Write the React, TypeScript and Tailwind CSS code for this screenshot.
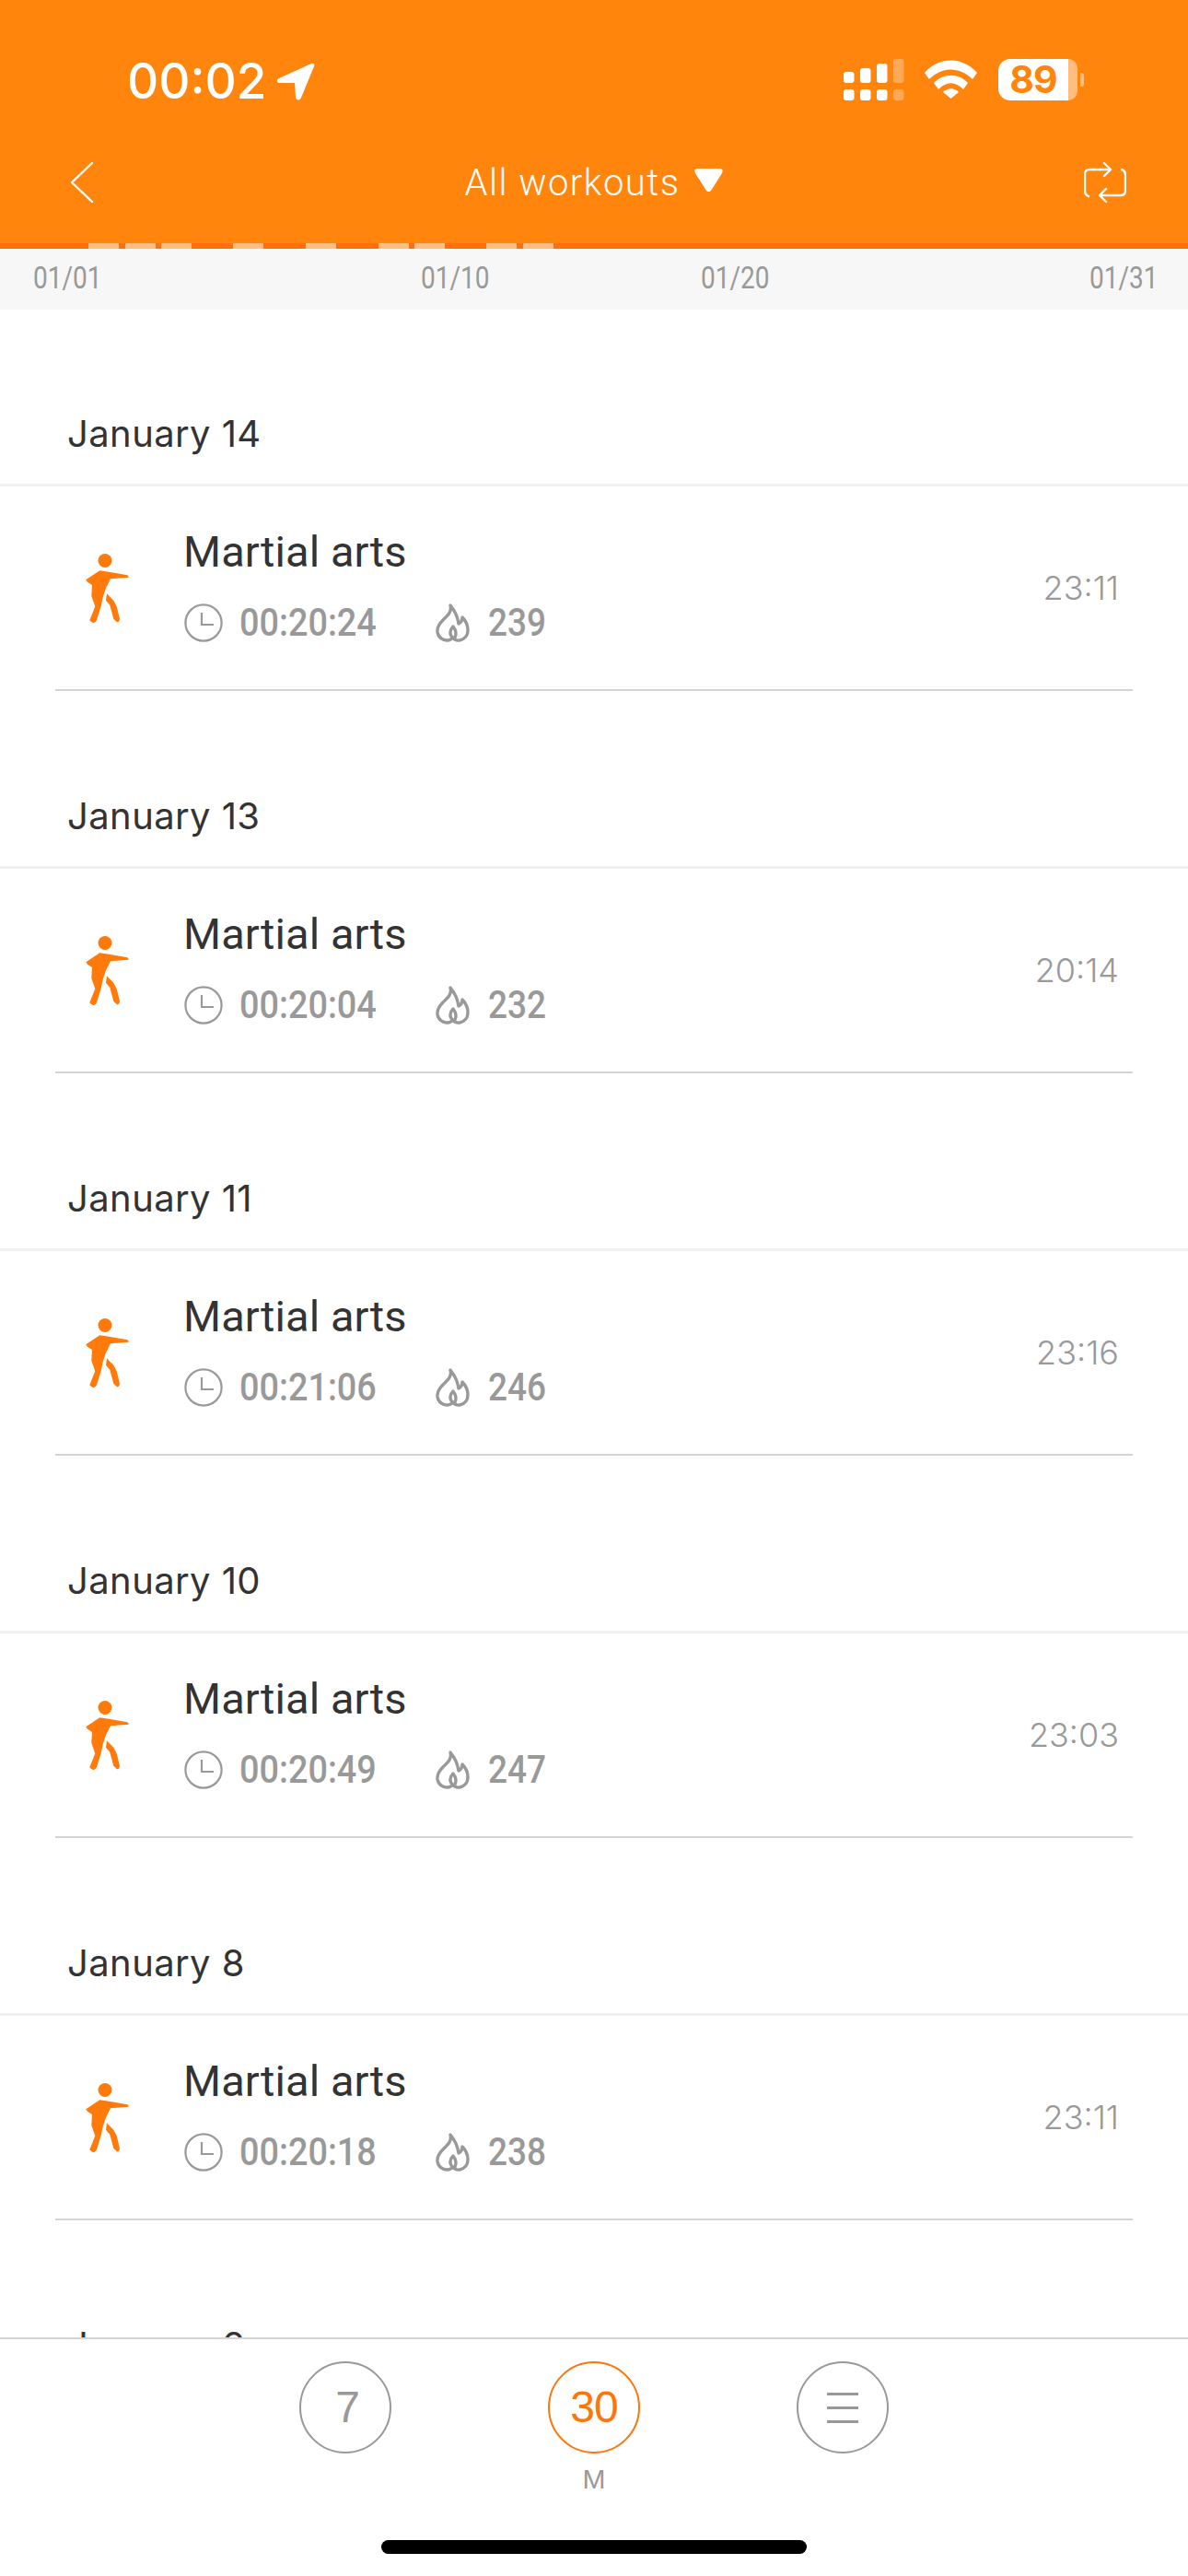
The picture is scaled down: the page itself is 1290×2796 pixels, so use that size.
const STATS = [
  { day: "January 14", dur: "00:20:24", cal: "239", time: "23:11" },
  { day: "January 13", dur: "00:20:04", cal: "232", time: "20:14" },
  { day: "January 11", dur: "00:21:06", cal: "246", time: "23:16" },
  { day: "January 10", dur: "00:20:49", cal: "247", time: "23:03" },
  { day: "January 8", dur: "00:20:18", cal: "238", time: "23:11" },
];

const TICKS = [96, 136, 175, 253, 332, 411, 450, 528, 568];

function Person() {
  return (
    <svg viewBox="0 0 48 77" className="w-[48px] h-[77px]" fill="#ff7a0a">
      <circle cx="22" cy="7.500" r="7.500" />
      <path d="M1.300 28.300 L16.300 18.300 L26.300 19.700 L46.300 23.300 Q48.500 24.800 47.300 25.700 L28 27.300 L23 37.300 L19.700 47.300 L18 55.700 L13 72.300 Q10 78 5.300 72.300 L11.300 57.300 L7.300 45.700 L8 34 L3 30.700 Z" />
      <path d="M24 43.300 L31.300 50.700 L34.700 57.300 L38 70.700 Q37.500 75 34.700 74 L31.300 70.700 L27.300 55.700 L23 50.700 Z" />
    </svg>
  );
}

function Clock() {
  return (
    <svg viewBox="0 0 42 42" className="w-[42px] h-[42px] shrink-0" fill="none" stroke="#999" strokeWidth="2.2">
      <circle cx="21" cy="21" r="19.600" />
      <path d="M19 10 V23 H32" />
    </svg>
  );
}

function Flame() {
  return (
    <svg viewBox="0 0 37 42" className="w-[37px] h-[42px] shrink-0" fill="none" stroke="#999" strokeWidth="3.400" strokeLinejoin="round" strokeLinecap="round">
      <path d="M16 2 C18 9 13 13 8 18 C3 23 1.500 27 2 31 C3 37 8 40.500 13 40 C15 40 17 39 18.500 37 C20 39 23 40.500 26 40 C31 39 35 35 35 29 C35 24 33 19 29 15 C29 18 27 21 25 22 C24 15 21 8 16 2 Z" />
      <path d="M18.500 37 C15 34 15 29 19 25 C22 29 23 33 21 37" />
    </svg>
  );
}

function Signal() {
  const bars = [
    { x: 0, y: 14, h: 12 },
    { x: 18, y: 10, h: 16 },
    { x: 36, y: 5, h: 21 },
  ];
  return (
    <svg viewBox="0 0 66 45" className="w-[66px] h-[45px]" fill="#fff">
      {bars.map((b) => (
        <g key={b.x}>
          <rect x={b.x} y={b.y} width="11.500" height={b.h} rx="3" />
          <rect x={b.x} y="33" width="11.500" height="12" rx="3" />
        </g>
      ))}
      <rect x="54" y="0" width="11.500" height="26" rx="3" fill="#ffa858" />
      <rect x="54" y="33" width="11.500" height="12" rx="3" fill="#ffa858" />
    </svg>
  );
}

function Wifi() {
  return (
    <svg viewBox="0 0 57 42" className="w-[57px] h-[42px]" fill="#fff">
      <path d="M0 14 C16 -4 41 -4 57 14 L52 21 C38 7 19 7 5 21 Z" />
      <path d="M10 25 C20 14 37 14 47 25 L42 32 C33 23 24 23 15 32 Z" />
      <path d="M20 35 C25 30 32 30 37 35 L28.500 42 Z" />
    </svg>
  );
}

function Swap() {
  return (
    <svg viewBox="0 0 46 44" className="w-[46px] h-[44px]" fill="none" stroke="#fff" strokeWidth="2.400" strokeLinecap="round" strokeLinejoin="round">
      <path d="M5 37 C2 36 1 34 1 31 V13 C1 10 3 8 6 8 H28" />
      <path d="M22 1 L29 8 L22 15" />
      <path d="M41 8 C44 9 45 11 45 14 V31 C45 34 43 36 40 36 H18" />
      <path d="M24 29 L17 36 L24 43" />
    </svg>
  );
}

function Workout({ day, dur, cal, time }: { day: string; dur: string; cal: string; time: string }) {
  return (
    <section className="h-[415px] flex flex-col shrink-0">
      <div className="h-[192px] shrink-0 flex items-end pl-[73px] pb-[30px] border-b-[3px] border-[#f0f0f0]">
        <span className="text-[40px] leading-[48px] tracking-[0.4px] text-[#333] font-['Inter',sans-serif]">{day}</span>
      </div>
      <div className="ml-[60px] mr-[60px] h-[222px] border-b-2 border-[#d4d4d4] flex items-start">
        <div className="w-[48px] ml-[32px] mt-[73px]"><Person /></div>
        <div className="ml-[60px] pt-[43px] flex flex-col flex-1">
          <span className="ml-[-1px] text-[47px] leading-[56px] tracking-[0.1px] text-[#333] font-['Roboto',sans-serif]">Martial arts</span>
          <div className="flex items-center mt-[28px] h-[42px] text-[#999] font-medium font-['Roboto',sans-serif]">
            <Clock />
            <span className="ml-[18px] w-[213px] text-[42px] leading-[42px] inline-block origin-left scale-x-[0.9]">{dur}</span>
            <Flame />
            <span className="ml-[20px] text-[42px] leading-[42px] inline-block origin-left scale-x-[0.88]">{cal}</span>
          </div>
        </div>
        <span className="self-center mr-[15px] text-[36px] leading-[44px] text-[#999] font-['Inter',sans-serif] font-light">{time}</span>
      </div>
    </section>
  );
}

function Axis({ label, className }: { label: string; className: string }) {
  return <span className={className}>{label}</span>;
}

export default function App() {
  return (
    <div className="w-[1290px] h-[2796px] bg-white flex flex-col overflow-hidden">
      <header className="h-[264px] bg-[#ff850d] shrink-0 flex flex-col text-white">
        <div className="h-[176px] flex items-start justify-between">
          <div className="flex items-center mt-[60px] ml-[138px]">
            <span className="text-[53px] leading-[56px] font-medium font-['Inter',sans-serif]">00:02</span>
            <svg viewBox="0 0 41 41" className="w-[41px] h-[41px] ml-[12px]" fill="#fff">
              <path d="M37 1 C40 0 41 2 40 4 L26 38 C24 42 20 41 20 37 L19 22 L3 22 C-1 22 -1 18 2 17 Z" />
            </svg>
          </div>
          <div className="flex items-start mt-[64px] mr-[113px]">
            <Signal />
            <div className="ml-[22px] mt-[1px]"><Wifi /></div>
            <div className="ml-[23px] relative w-[93px] h-[45px] flex items-center">
              <div className="w-[76px] h-[45px] bg-white rounded-l-[13px] flex items-center justify-center text-[#ff850d] font-bold text-[41px] leading-[45px] font-['Inter',sans-serif] tracking-[-1px]">89</div>
              <div className="w-[10px] h-[45px] bg-[#ffbd80] rounded-r-[11px]" />
              <div className="ml-[3px] w-[4px] h-[15px] bg-[#ffbd80] rounded-r-[3px]" />
            </div>
          </div>
        </div>
        <div className="h-[44px] relative flex items-center justify-center">
          <svg viewBox="0 0 24 44" className="absolute left-[77px] top-0 w-[24px] h-[44px]" fill="none" stroke="#fff" strokeWidth="2.400" strokeLinecap="round" strokeLinejoin="round">
            <path d="M23 1 L1 22 L23 43" />
          </svg>
          <span className="mt-[2px] text-[40px] leading-[48px] font-light tracking-[1.5px] font-['Roboto',sans-serif]">All workouts</span>
          <svg viewBox="0 0 31 25" className="w-[31px] h-[25px] ml-[16px] mt-[-6px]" fill="#fff">
            <path d="M3 0 H28 C31 0 31 3 30 5 L18 24 C16.500 25.500 14.500 25.500 13 24 L1 5 C0 3 0 0 3 0 Z" />
          </svg>
          <div className="absolute left-[1177px] top-0"><Swap /></div>
        </div>
      </header>
      <div className="h-[6px] bg-[#ff6f0e] shrink-0 relative">
        {TICKS.map((x) => (
          <div key={x} className="absolute top-0 h-[6px] w-[33px] bg-[#ffbd80]" style={{ left: x }} />
        ))}
      </div>
      <div className="h-[66px] bg-[#f7f7f7] shrink-0 flex items-start pt-[15px] pl-[36px] text-[#999] text-[33px] leading-[33px] font-['Roboto',sans-serif]">
        <Axis label="01/01" className="w-[421px] inline-block origin-left scale-x-[0.85]" />
        <Axis label="01/10" className="w-[304px] inline-block origin-left scale-x-[0.85]" />
        <Axis label="01/20" className="w-[422px] inline-block origin-left scale-x-[0.85]" />
        <Axis label="01/31" className="inline-block origin-left scale-x-[0.85]" />
      </div>
      <main className="flex-1 overflow-hidden flex flex-col">
        {STATS.map((s) => (
          <Workout key={s.day} {...s} />
        ))}
        <div className="h-[192px] shrink-0 flex items-end pl-[73px] pb-[33px]">
          <span className="text-[40px] leading-[48px] tracking-[0.4px] text-[#333] font-['Inter',sans-serif]">January 6</span>
        </div>
      </main>
      <footer className="h-[259px] shrink-0 border-t-2 border-[#d4d4d4] bg-white relative">
        <div className="flex justify-center gap-[170px] pt-[24px]">
          <div className="w-[100px] flex flex-col items-center">
            <div className="w-[100px] h-[100px] rounded-full border-2 border-[#999] flex items-center justify-center pl-[5px] text-[48px] text-[#999] font-['Liberation_Sans',sans-serif]">7</div>
          </div>
          <div className="w-[100px] flex flex-col items-center">
            <div className="w-[100px] h-[100px] rounded-full border-2 border-[#ff750a] flex items-center justify-center text-[48px] tracking-[-1px] text-[#ff750a] font-['Liberation_Sans',sans-serif]">30</div>
            <span className="mt-[11px] text-[30px] leading-[34px] text-[#999] font-['Liberation_Sans',sans-serif]">M</span>
          </div>
          <div className="w-[100px] flex flex-col items-center">
            <div className="w-[100px] h-[100px] rounded-full border-2 border-[#999] flex flex-col items-center justify-center gap-[12px]">
              <div className="w-[34px] h-[3px] bg-[#999]" />
              <div className="w-[34px] h-[3px] bg-[#999]" />
              <div className="w-[34px] h-[3px] bg-[#999]" />
            </div>
          </div>
        </div>
        <div className="absolute left-[414px] top-[218px] w-[462px] h-[15px] rounded-full bg-black" />
      </footer>
    </div>
  );
}
